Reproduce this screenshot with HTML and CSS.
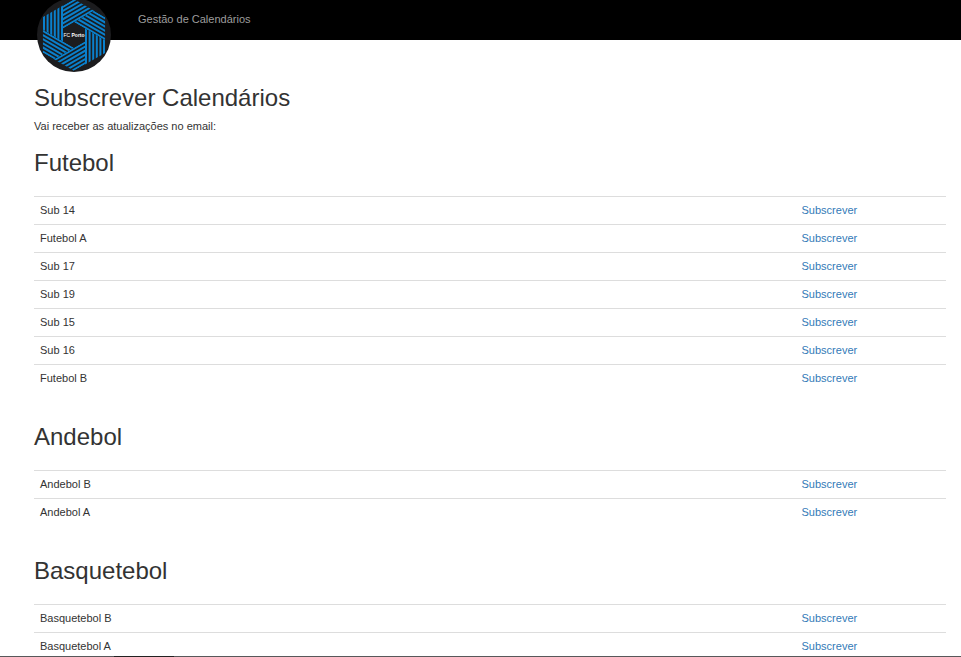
FILE: index.html
```
<!DOCTYPE html>
<html lang="pt">
<head>
<meta charset="utf-8">
<title>Gestão de Calendários</title>
<link rel="stylesheet" href="styles.css">
</head>

<body>
<header class="navbar">
	<a class="logo" href="#" aria-label="FC Porto">
		<svg viewBox="-37 -37 74 74">
			<defs>
				<clipPath id="blade">
					<polygon points="-31,-18 -11,-29.5 -11,6.4 -31,-5.2"/>
				</clipPath>
				<g id="stripes" clip-path="url(#blade)">
					<path d="M-30-36V10M-26.4-36V10M-22.8-36V10M-19.2-36V10M-15.6-36V10M-12-36V10"/>
				</g>
			</defs>
			<circle r="37" fill="#1c1c1e"/>
			<g stroke="#0a80cc" stroke-width="2">
				<use href="#stripes"/>
				<use href="#stripes" transform="rotate(60)"/>
				<use href="#stripes" transform="rotate(120)"/>
				<use href="#stripes" transform="rotate(180)"/>
				<use href="#stripes" transform="rotate(240)"/>
				<use href="#stripes" transform="rotate(300)"/>
			</g>
			<text class="logo-text" y="2" text-anchor="middle">FC<tspan class="logo-bold"> Porto</tspan></text>
		</svg>
	</a>
	<a class="navbar-link" href="#">Gestão de Calendários</a>
</header>
<main class="container">
	<h1>Subscrever Calendários</h1>
	<p>Vai receber as atualizações no email:</p>

	<h2>Futebol</h2>
	<table class="table">
		<tr><td>Sub 14</td><td class="action"><a href="#">Subscrever</a></td></tr>
		<tr><td>Futebol A</td><td class="action"><a href="#">Subscrever</a></td></tr>
		<tr><td>Sub 17</td><td class="action"><a href="#">Subscrever</a></td></tr>
		<tr><td>Sub 19</td><td class="action"><a href="#">Subscrever</a></td></tr>
		<tr><td>Sub 15</td><td class="action"><a href="#">Subscrever</a></td></tr>
		<tr><td>Sub 16</td><td class="action"><a href="#">Subscrever</a></td></tr>
		<tr><td>Futebol B</td><td class="action"><a href="#">Subscrever</a></td></tr>
	</table>

	<h2>Andebol</h2>
	<table class="table">
		<tr><td>Andebol B</td><td class="action"><a href="#">Subscrever</a></td></tr>
		<tr><td>Andebol A</td><td class="action"><a href="#">Subscrever</a></td></tr>
	</table>

	<h2>Basquetebol</h2>
	<table class="table">
		<tr><td>Basquetebol B</td><td class="action"><a href="#">Subscrever</a></td></tr>
		<tr><td>Basquetebol A</td><td class="action"><a href="#">Subscrever</a></td></tr>
	</table>
</main>
<div class="bottom-line"><span></span></div>
</body>
</html>
```
FILE: styles.css
```
* {
	box-sizing: border-box;
}
body {
	margin: 0;
	font-family: "Liberation Sans", Arial, sans-serif;
	font-size: 11px;
	line-height: 15px;
	color: #333;
	background-color: #fff;
}
a {
	color: #337ab7;
	text-decoration: none;
}
.navbar {
	position: relative;
	display: flex;
	align-items: center;
	height: 40px;
	padding: 0 0 2px 138px;
	background-color: #000;
}
.navbar-link {
	color: #9d9d9d;
}
/* round badge hangs below the bar */
.logo {
	position: absolute;
	top: -2px;
	left: 37px;
	width: 74px;
	height: 74px;
}
.logo svg {
	display: block;
	width: 100%;
	height: 100%;
}
.logo-text {
	font-size: 5px;
	fill: #fff;
}
.logo-bold {
	font-weight: bold;
}
.container {
	padding: 45px 15px 0 34px;
}
h1, h2 {
	margin: 0;
	font-size: 24px;
	font-weight: 500;
	line-height: 26px;
}
h1 {
	margin-bottom: 8px;
}
h2 {
	margin-bottom: 20px;
}
p {
	margin: 0 0 16px;
}
.table {
	width: 100%;
	margin-bottom: 32px;
	border-collapse: separate;
	border-spacing: 0;
}
.table:last-child {
	margin-bottom: 0;
}
.table td {
	padding: 6px;
	border-top: 1px solid #ddd;
}
.table .action {
	width: 16.5%;
}
.bottom-line {
	position: fixed;
	right: 0;
	bottom: 0;
	left: 0;
	height: 1px;
	padding-left: 114px;
	background-color: #58585a;
}
.bottom-line span {
	display: block;
	width: 60px;
	height: 1px;
	background-color: #222;
}
```
